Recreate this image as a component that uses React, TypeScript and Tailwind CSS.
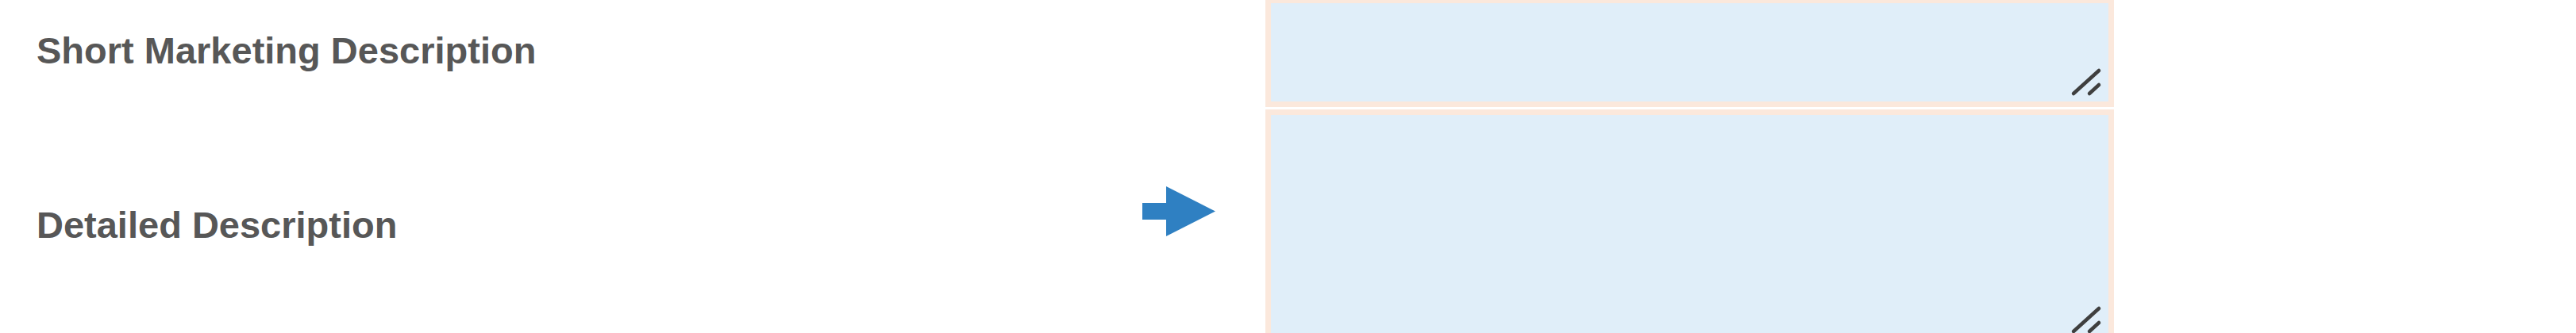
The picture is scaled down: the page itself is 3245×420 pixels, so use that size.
import React from 'react';

type FieldRowProps = {
  label: string;
  height: string;
  marker?: boolean;
};

function ResizeGrip() {
  return (
    <svg
      className="pointer-events-none absolute right-0 bottom-0"
      width="48"
      height="44"
      viewBox="0 0 48 44"
      fill="none"
      stroke="#3f3f3f"
      strokeWidth="4.5"
      strokeLinecap="round"
    >
      <line x1="4" y1="34" x2="36" y2="5" />
      <line x1="24" y1="34" x2="36" y2="23" />
    </svg>
  );
}

function PointerArrow() {
  return (
    <svg width="94" height="64" viewBox="0 0 94 64" fill="#2f80c2">
      <rect x="1" y="21" width="31" height="21" />
      <polygon points="31,0 93,31.5 31,63" />
    </svg>
  );
}

function FieldRow({ label, height, marker }: FieldRowProps) {
  return (
    <div className={`flex ${height}`}>
      <div className="flex w-[1392px] items-center pb-[6px]">
        <span className="text-[47px] leading-none font-bold text-[#575757]">{label}</span>
      </div>
      <div className="w-[156px] pt-[97px]">{marker && <PointerArrow />}</div>
      <div className="relative w-[1069px] border-[7px] border-[#fbe8dc] bg-[#e0eef9]">
        <textarea className="h-full w-full resize-none bg-transparent outline-none" aria-label={label} />
        <ResizeGrip />
      </div>
    </div>
  );
}

export default function App() {
  return (
    <div className="min-h-screen overflow-hidden bg-white pl-[46px] font-['Liberation_Sans',Arial,sans-serif]">
      <div className="-mt-[3px] flex flex-col gap-[3px]">
        <FieldRow label="Short Marketing Description" height="h-[138px]" />
        <FieldRow label="Detailed Description" height="h-[297px]" marker />
      </div>
    </div>
  );
}
